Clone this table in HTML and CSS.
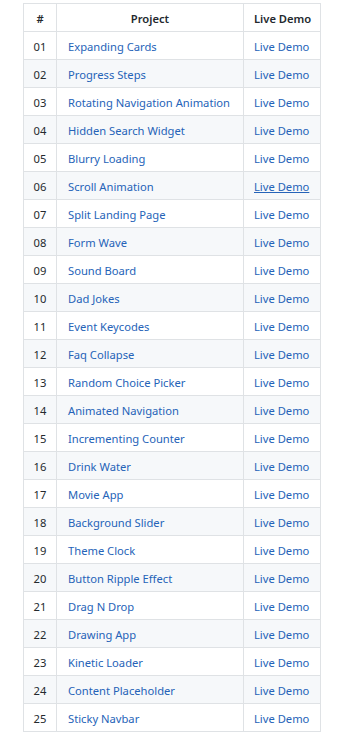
FILE: index.html
```html
<!DOCTYPE html>
<html>
<head>
<meta charset="utf-8">
<link rel="stylesheet" href="styles.css">
</head>
<body>
<table class="projects">
<colgroup><col class="c-num"><col class="c-name"><col class="c-demo"></colgroup>
<thead>
<tr><th>#</th><th>Project</th><th>Live Demo</th></tr>
</thead>
<tbody>
<tr><td class="num">01</td><td><a href="#">Expanding Cards</a></td><td><a href="#">Live Demo</a></td></tr>
<tr><td class="num">02</td><td><a href="#">Progress Steps</a></td><td><a href="#">Live Demo</a></td></tr>
<tr><td class="num">03</td><td><a href="#">Rotating Navigation Animation</a></td><td><a href="#">Live Demo</a></td></tr>
<tr><td class="num">04</td><td><a href="#">Hidden Search Widget</a></td><td><a href="#">Live Demo</a></td></tr>
<tr><td class="num">05</td><td><a href="#">Blurry Loading</a></td><td><a href="#">Live Demo</a></td></tr>
<tr><td class="num">06</td><td><a href="#">Scroll Animation</a></td><td><a href="#" class="hover">Live Demo</a></td></tr>
<tr><td class="num">07</td><td><a href="#">Split Landing Page</a></td><td><a href="#">Live Demo</a></td></tr>
<tr><td class="num">08</td><td><a href="#">Form Wave</a></td><td><a href="#">Live Demo</a></td></tr>
<tr><td class="num">09</td><td><a href="#">Sound Board</a></td><td><a href="#">Live Demo</a></td></tr>
<tr><td class="num">10</td><td><a href="#">Dad Jokes</a></td><td><a href="#">Live Demo</a></td></tr>
<tr><td class="num">11</td><td><a href="#">Event Keycodes</a></td><td><a href="#">Live Demo</a></td></tr>
<tr><td class="num">12</td><td><a href="#">Faq Collapse</a></td><td><a href="#">Live Demo</a></td></tr>
<tr><td class="num">13</td><td><a href="#">Random Choice Picker</a></td><td><a href="#">Live Demo</a></td></tr>
<tr><td class="num">14</td><td><a href="#">Animated Navigation</a></td><td><a href="#">Live Demo</a></td></tr>
<tr><td class="num">15</td><td><a href="#">Incrementing Counter</a></td><td><a href="#">Live Demo</a></td></tr>
<tr><td class="num">16</td><td><a href="#">Drink Water</a></td><td><a href="#">Live Demo</a></td></tr>
<tr><td class="num">17</td><td><a href="#">Movie App</a></td><td><a href="#">Live Demo</a></td></tr>
<tr><td class="num">18</td><td><a href="#">Background Slider</a></td><td><a href="#">Live Demo</a></td></tr>
<tr><td class="num">19</td><td><a href="#">Theme Clock</a></td><td><a href="#">Live Demo</a></td></tr>
<tr><td class="num">20</td><td><a href="#">Button Ripple Effect</a></td><td><a href="#">Live Demo</a></td></tr>
<tr><td class="num">21</td><td><a href="#">Drag N Drop</a></td><td><a href="#">Live Demo</a></td></tr>
<tr><td class="num">22</td><td><a href="#">Drawing App</a></td><td><a href="#">Live Demo</a></td></tr>
<tr><td class="num">23</td><td><a href="#">Kinetic Loader</a></td><td><a href="#">Live Demo</a></td></tr>
<tr><td class="num">24</td><td><a href="#">Content Placeholder</a></td><td><a href="#">Live Demo</a></td></tr>
<tr><td class="num">25</td><td><a href="#">Sticky Navbar</a></td><td><a href="#">Live Demo</a></td></tr>
</tbody>
</table>
</body>
</html>
```
FILE: styles.css
```css
html, body {
  margin: 0;
  padding: 0;
  background: #fff;
}
body {
  padding: 3px 0 0 23px;
  font-family: "Noto Sans", "Open Sans", sans-serif;
  font-size: 11.2px;
  color: #24292e;
}
.projects {
  border-collapse: collapse;
  table-layout: fixed;
  width: 297px;
}
.c-num { width: 33px; }
.c-name { width: 187px; }
.c-demo { width: 77px; }
.projects th,
.projects td {
  border: 1px solid #dfe2e5;
  height: 28px;
  padding: 1px 10px 0;
  box-sizing: border-box;
  white-space: nowrap;
}
.projects th {
  font-weight: 600;
  text-align: center;
  background: #fff;
}
.projects td {
  text-align: left;
}
.projects td.num {
  text-align: center;
  padding: 1px 0 0;
}
.projects td:nth-child(2) {
  padding-left: 11px;
}
.projects tbody tr:nth-child(even) {
  background: #f6f8fa;
}
.projects a {
  color: #2563b8;
  text-decoration: none;
}
.projects a.hover {
  text-decoration: underline;
}
```
